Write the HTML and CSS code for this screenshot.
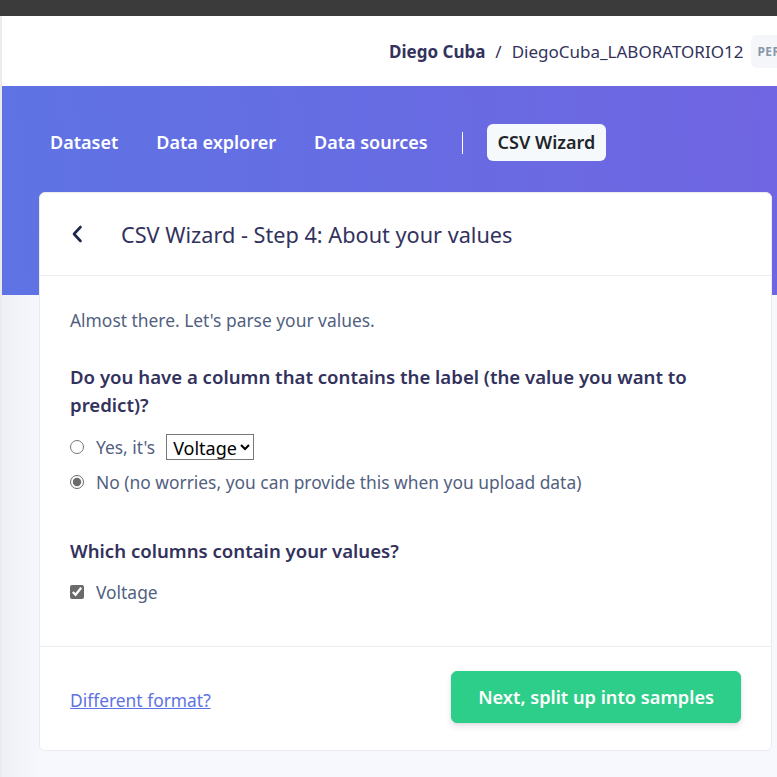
FILE: index.html
```html
<!DOCTYPE html>
<html lang="en">
<head>
<meta charset="utf-8">
<title>CSV Wizard</title>
<link rel="stylesheet" href="styles.css">
</head>
<body>
<div class="topbar"></div>
<div class="main">
  <header class="header">
    <span class="user">Diego Cuba</span>
    <span class="slash">/</span>
    <span class="project">DiegoCuba_LABORATORIO12</span>
    <span class="badge">Per</span>
  </header>
  <section class="band">
    <nav class="tabs">
      <span class="tab">Dataset</span>
      <span class="tab">Data explorer</span>
      <span class="tab">Data sources</span>
      <span class="sep"></span>
      <span class="tab active">CSV Wizard</span>
    </nav>
  </section>
  <div class="content">
    <div class="card">
      <div class="card-header">
        <svg class="back" width="12" height="18" viewBox="0 0 12 18"><path d="M9.5 2 L3 9 L9.5 16" fill="none" stroke="#1b2a4a" stroke-width="2.6" stroke-linecap="round" stroke-linejoin="round"/></svg>
        <h1 class="title">CSV Wizard - Step 4: About your values</h1>
      </div>
      <div class="card-body">
        <p class="intro">Almost there. Let's parse your values.</p>
        <h2 class="question">Do you have a column that contains the label (the value you want to predict)?</h2>
        <label class="option"><input type="radio" name="label"> <span>Yes, it's</span>
          <select class="select"><option>Voltage</option></select></label>
        <label class="option"><input type="radio" name="label" checked> <span>No (no worries, you can provide this when you upload data)</span></label>
        <h2 class="question q2">Which columns contain your values?</h2>
        <label class="option"><input type="checkbox" checked> <span>Voltage</span></label>
      </div>
      <div class="card-footer">
        <a class="link" href="#">Different format?</a>
        <button class="btn">Next, split up into samples</button>
      </div>
    </div>
  </div>
</div>
</body>
</html>
```
FILE: styles.css
```css
* { box-sizing: border-box; }
html, body { margin: 0; padding: 0; }
body {
  font-family: "Noto Sans", "Open Sans", sans-serif;
  background: #f7f8fd;
  overflow: hidden;
  width: 777px;
  height: 777px;
}
.topbar { height: 16px; background: #3b3b3b; }
.main {
  border-left: 2px solid #ebebeb;
  background: linear-gradient(90deg, #eef0f6 0, #f7f8fd 40px);
  height: 761px;
}
.header {
  height: 70px;
  background: #fff;
  display: flex;
  align-items: center;
  padding-left: 387px;
  white-space: nowrap;
  overflow: hidden;
  font-size: 17px;
  color: #32325d;
}
.user { font-weight: 700; }
.slash { margin: 0 10px; }
.project { font-weight: 400; }
.badge {
  margin-left: 8px;
  background: #f4f6fa;
  color: #8898aa;
  font-size: 12px;
  font-weight: 700;
  text-transform: uppercase;
  padding: 8px 6px;
  border-radius: 6px;
  letter-spacing: 0.5px;
}
.band {
  height: 209px;
  background: linear-gradient(87deg, #5e73e4 0, #7065e2 100%);
  padding: 38px 0 0 37px;
}
.tabs { display: flex; align-items: center; gap: 16px; }
.tab {
  color: #fff;
  font-size: 18px;
  font-weight: 600;
  padding: 0 11px;
  height: 37px;
  line-height: 37px;
  border-radius: 6px;
}
.tab.active { background: #f6f9fc; color: #212529; }
.sep { width: 16px; height: 22px; display: flex; justify-content: center; }
.sep::before { content: ""; width: 1.5px; height: 100%; background: #fff; }
.content { padding: 0 5px 0 37px; margin-top: -103px; }
.card {
  background: #fff;
  border: 1px solid #e9ecef;
  border-radius: 6px;
  width: 733px;
}
.card-header {
  height: 83px;
  display: flex;
  align-items: center;
  padding-left: 31px;
  border-bottom: 1px solid #ebedf1;
}
.back { margin-right: 38px; }
.title {
  margin: 0;
  font-size: 21.7px;
  font-weight: 400;
  color: #32325d;
}
.card-body { padding: 32px 30px 37px; }
.intro { margin: 0 0 31px; font-size: 17.4px; line-height: 24px; color: #525f7f; }
.question {
  margin: 0 0 10px;
  font-size: 18.6px;
  line-height: 28px;
  font-weight: 600;
  color: #32325d;
}
.q2 { margin-top: 38px; margin-bottom: 9px; }
.option {
  display: flex;
  align-items: center;
  height: 35px;
  font-size: 17.4px;
  color: #525f7f;
}
.option input {
  margin: 0 12px 0 0;
  width: 14px;
  height: 14px;
  accent-color: #6b6b6b;
}
.select {
  margin-left: 11px;
  height: 26px;
  font-family: "Noto Sans", sans-serif;
  font-size: 18px;
  color: #000;
  border: 1px solid #767676;
  border-radius: 0;
  background: #fff;
  padding: 0 0 0 2px;
}
.card-footer {
  border-top: 1px solid #ebedf1;
  height: 104px;
  display: flex;
  align-items: center;
  justify-content: space-between;
  padding: 0 30px 3px 30px;
}
.link { color: #5e72e4; font-size: 17.4px; text-decoration: underline; margin-top: 5px; }
.btn {
  background: #2dce89;
  color: #fff;
  border: 1px solid #2dce89;
  border-radius: 6px;
  font-family: "Noto Sans", sans-serif;
  font-size: 18.2px;
  font-weight: 600;
  height: 52px;
  padding: 0 26px;
  box-shadow: 0 4px 6px rgba(50,50,93,.11), 0 1px 3px rgba(0,0,0,.08);
}
```
